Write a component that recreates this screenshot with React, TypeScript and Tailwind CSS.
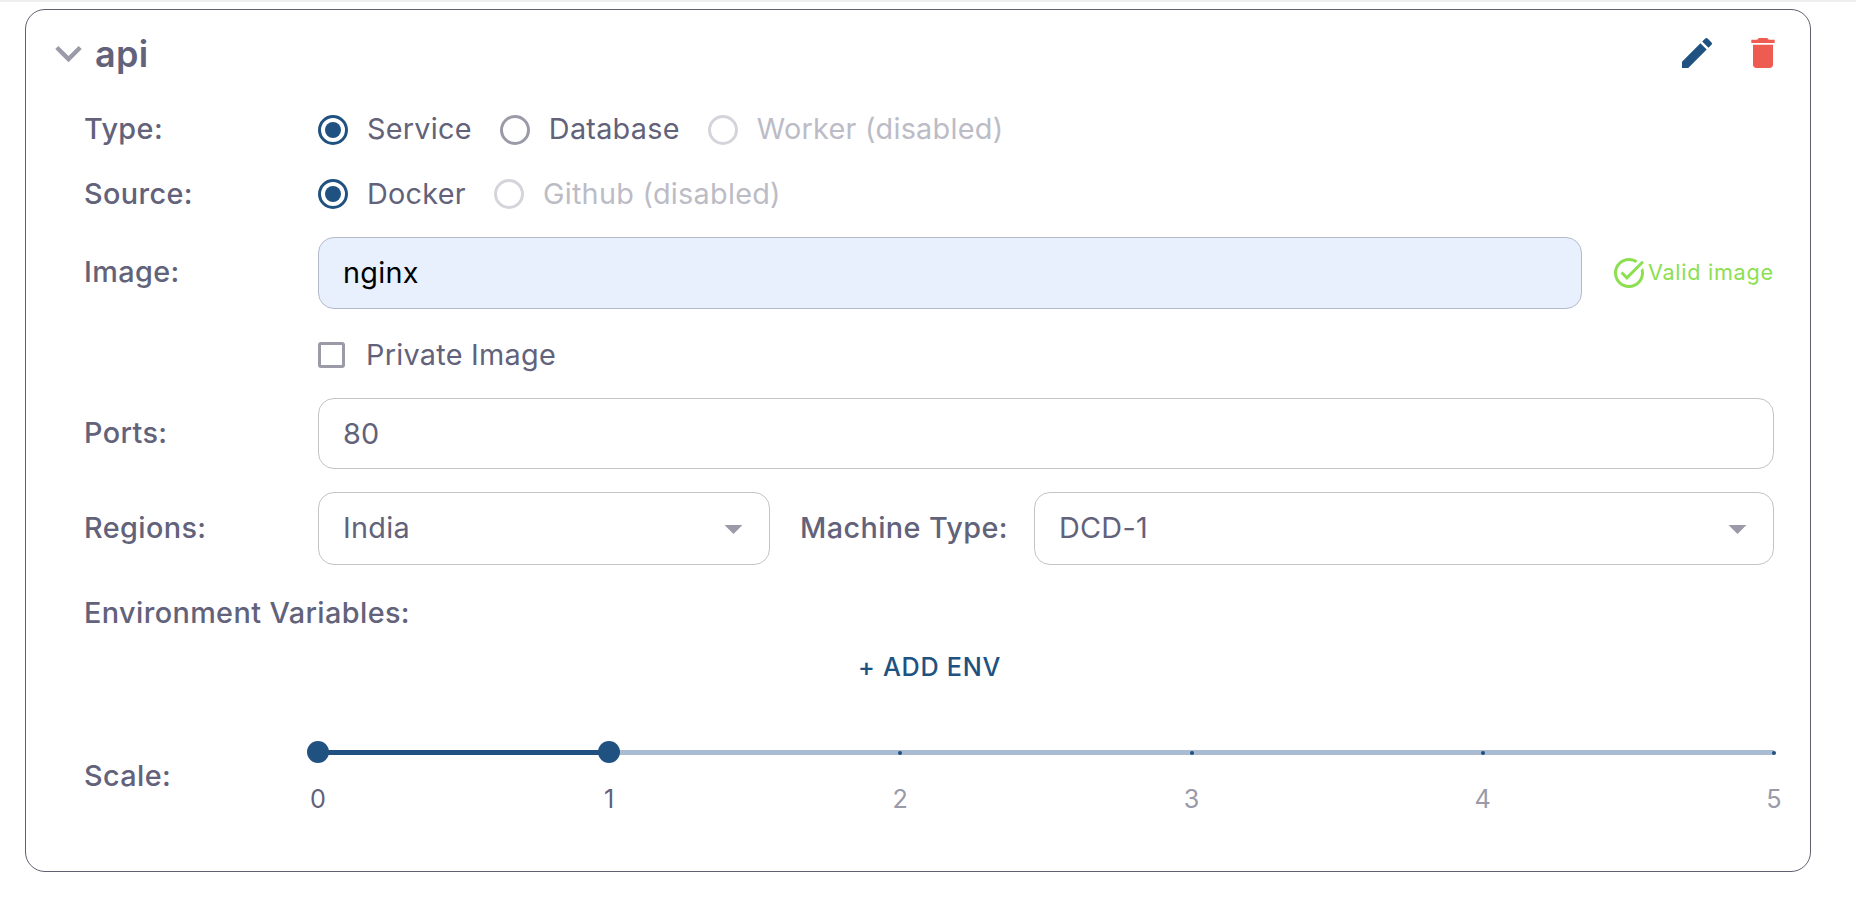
import React from 'react';

const EDIT = 'M3 17.25V21h3.75L17.81 9.94l-3.75-3.75L3 17.25zM20.71 7.04c.39-.39.39-1.02 0-1.41l-2.34-2.34a.9959.9959 0 0 0-1.41 0l-1.83 1.83 3.75 3.75 1.83-1.83z';
const TRASH = 'M6 19c0 1.1.9 2 2 2h8c1.1 0 2-.9 2-2V7H6v12zM19 4h-3.5l-1-1h-5l-1 1H5v2h14V4z';
const TASK = 'M22 5.18 10.59 16.6l-4.24-4.24 1.41-1.41 2.83 2.83 10-10L22 5.18zm-2.21 5.04c.13.57.21 1.17.21 1.78 0 4.42-3.58 8-8 8s-8-3.58-8-8 3.58-8 8-8c1.58 0 3.04.46 4.28 1.25l1.44-1.44C16.1 2.67 14.13 2 12 2 6.48 2 2 6.48 2 12s4.48 10 10 10 10-4.48 10-10c0-1.19-.22-2.33-.6-3.39l-1.61 1.61z';
const CHEVRON = 'M16.59 8.59 12 13.17 7.41 8.59 6 10l6 6 6-6z';

function Icon({ d, className }: { d: string; className: string }) {
    return (
        <svg viewBox="0 0 24 24" fill="currentColor" className={className}>
            <path d={d} />
        </svg>
    );
}

function Radio({ label, checked, disabled }: { label: string; checked?: boolean; disabled?: boolean }) {
    const ring = checked ? 'border-[#205281]' : disabled ? 'border-[#d4d4da]' : 'border-[#9a9aa8]';
    return (
        <div className="flex items-center gap-[19px]">
            <div className={`w-[30px] h-[30px] rounded-full border-[3px] flex items-center justify-center ${ring}`}>
                {checked && <div className="w-4 h-4 rounded-full bg-[#205281]" />}
            </div>
            <span className={disabled ? 'text-[#bcbcc6]' : 'text-[#62627a]'}>{label}</span>
        </div>
    );
}

function Label({ children, className = '' }: { children: React.ReactNode; className?: string }) {
    return <div className={`font-medium text-[#62627a] tracking-[0.4px] -ml-[1px] ${className}`}>{children}</div>;
}

function Select({ value, className }: { value: string; className: string }) {
    return (
        <div className={`h-[73px] border border-[#c4c4c8] rounded-[16px] flex items-center justify-between pl-[24px] pr-[14px] ${className}`}>
            <span className="text-[#62627a]">{value}</span>
            <svg viewBox="0 0 24 24" fill="#9a9aa8" className="w-[43px] h-[43px]">
                <path d="m7 10 5 5 5-5z" />
            </svg>
        </div>
    );
}

export default function App() {
    const marks = [0, 1, 2, 3, 4, 5];

    return (
        <div className="min-h-[900px] bg-white border-t-[2px] border-[#eeeeee] pt-[7px] text-[28.8px] leading-none tracking-[0.27px]" style={{ fontFamily: 'Inter, sans-serif' }}>
            <div className="ml-[25px] w-[1786px] h-[863px] border border-[#5f5f70] rounded-[20px] pr-[36px]">
                {/* header */}
                <div className="h-[87px] flex items-start justify-between">
                    <div className="flex items-center pl-[16px] pt-[17px]">
                        <Icon d={CHEVRON} className="w-[53px] h-[53px] text-[#9a9aa8]" />
                        <span className="font-semibold text-[36px] text-[#62627a]">api</span>
                    </div>
                    <div className="flex gap-[26px] -mr-[9px] pt-[23px]">
                        <Icon d={EDIT} className="w-10 h-10 text-[#205281]" />
                        <Icon d={TRASH} className="w-10 h-10 text-[#ee5b50]" />
                    </div>
                </div>

                <div className="pl-[59px]">
                    <div className="flex items-center h-[65px]">
                        <Label className="w-[234px]">Type:</Label>
                        <div className="flex gap-[28px]">
                            <Radio label="Service" checked />
                            <Radio label="Database" />
                            <Radio label="Worker (disabled)" disabled />
                        </div>
                    </div>
                    <div className="flex items-center h-[64px]">
                        <Label className="w-[234px]">Source:</Label>
                        <div className="flex gap-[28px]">
                            <Radio label="Docker" checked />
                            <Radio label="Github (disabled)" disabled />
                        </div>
                    </div>
                    <div className="flex items-center h-[73px] mt-[10px]">
                        <Label className="w-[234px]">Image:</Label>
                        <input
                            readOnly
                            value="nginx"
                            className="w-[1264px] h-[72px] bg-[#e8f0fe] border border-[#b4bacb] rounded-[16px] px-[24px] text-black outline-none"
                        />
                        <div className="flex items-center ml-[29px]">
                            <Icon d={TASK} className="w-9 h-9 text-[#8cdf50]" />
                            <span className="ml-[1px] text-[21.6px] text-[#8cdf50] tracking-[0.72px]">Valid image</span>
                        </div>
                    </div>
                    <div className="flex items-center h-[26px] mt-[33px] ml-[233px] gap-[21px]">
                        <div className="w-[27px] h-[26px] rounded-[3px] border-[3px] border-[#9a9aa8]" />
                        <span className="text-[#62627a]">Private Image</span>
                    </div>
                    <div className="flex items-center h-[71px] mt-[30px]">
                        <Label className="w-[234px]">Ports:</Label>
                        <input
                            readOnly
                            value="80"
                            className="flex-1 h-[71px] border border-[#c4c4c8] rounded-[16px] px-[24px] text-[#62627a] outline-none"
                        />
                    </div>
                    <div className="flex items-center h-[73px] mt-[23px]">
                        <Label className="w-[234px]">Regions:</Label>
                        <Select value="India" className="w-[452px]" />
                        <Label className="ml-[30px] w-[234px]">Machine Type:</Label>
                        <Select value="DCD-1" className="flex-1" />
                    </div>
                    <Label className="mt-[34px] h-[26px]">Environment Variables:</Label>
                    <div className="mt-[27px] flex justify-center">
                        <button className="text-[#205281] text-[25.2px] font-medium tracking-[0.72px] h-[32px]">+ ADD ENV</button>
                    </div>

                    {/* scale slider */}
                    <div className="flex mt-[66px]">
                        <Label className="w-[234px] mt-[12px]">Scale:</Label>
                        <div className="flex-1 relative h-[80px]">
                            <div className="h-[5px] bg-[#a9bcd2]" />
                            <div className="absolute left-0 top-0 h-[5px] w-[20%] bg-[#205281]" />
                            {marks.map((m) => (
                                <div key={m} className="absolute top-0 h-[5px] w-0" style={{ left: `${m * 20}%` }}>
                                    {m < 2 ? (
                                        <div className="absolute left-[-11px] top-[-9px] w-[22px] h-[22px] rounded-full bg-[#205281]" />
                                    ) : (
                                        <div className="absolute left-[-2px] top-[0.5px] w-[4px] h-[4px] rounded-full bg-[#205281]" />
                                    )}
                                    <span className={`absolute top-[37px] left-0 -translate-x-1/2 text-[25.2px] ${m < 2 ? 'text-[#62627a]' : 'text-[#9a9aa8]'}`}>{m}</span>
                                </div>
                            ))}
                        </div>
                    </div>
                </div>
            </div>
        </div>
    );
}
